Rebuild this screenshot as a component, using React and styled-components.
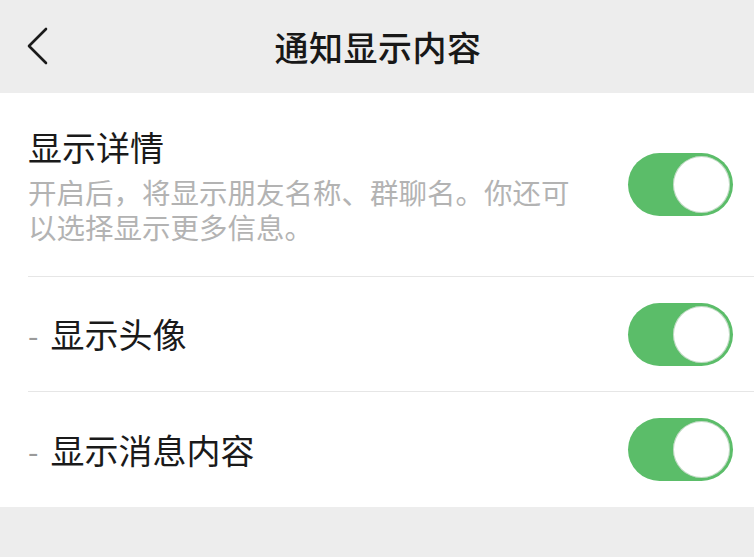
import React, { useState } from 'react';
import styled, { createGlobalStyle } from 'styled-components';

const GlobalStyle = createGlobalStyle`
  html, body {
    margin: 0;
    padding: 0;
    background: #ededed;
    font-family: "Noto Sans CJK SC", "Noto Sans", sans-serif;
  }
`;

const Page = styled.div`
  width: 754px;
  height: 557px;
  background: #ededed;
  overflow: hidden;
`;

const Header = styled.header`
  height: 93px;
  display: flex;
  align-items: center;
  justify-content: center;
  position: relative;
  background: #ededed;
`;

const BackButton = styled.button`
  position: absolute;
  left: 22px;
  top: 24px;
  width: 32px;
  height: 44px;
  padding: 0;
  border: none;
  background: none;
  display: flex;
  align-items: center;
  justify-content: center;
`;

const Title = styled.h1`
  margin: 0 0 0 2px;
  font-size: 34px;
  font-weight: 500;
  color: #181818;
  letter-spacing: 0.5px;
`;

const Section = styled.section`
  background: #fff;
`;

const Row = styled.div`
  padding-left: 28px;
`;

const RowInner = styled.div`
  display: flex;
  align-items: center;
  justify-content: space-between;
  padding-right: 21px;
  height: ${p => p.$height}px;
  box-sizing: border-box;
  border-bottom: ${p => (p.$last ? 'none' : '1px solid #e6e6e6')};
`;

const TextCol = styled.div`
  width: 560px;
`;

const ItemTitle = styled.div`
  font-size: 34px;
  line-height: 44px;
  color: #1a1a1a;
  display: flex;
  align-items: center;
`;

const Dash = styled.span`
  color: #9a9a9a;
  font-size: 30px;
  margin-right: 12px;
`;

const Desc = styled.div`
  margin-top: 5px;
  font-size: 28.5px;
  line-height: 35px;
  color: #b3b3b3;
`;

const Track = styled.button`
  width: 105px;
  height: 63px;
  border-radius: 32px;
  border: none;
  background: ${p => (p.$on ? '#5bbd69' : '#e5e5e5')};
  display: flex;
  align-items: center;
  justify-content: ${p => (p.$on ? 'flex-end' : 'flex-start')};
  padding: 0 3px;
  box-sizing: border-box;
  flex-shrink: 0;
  cursor: pointer;
`;

const Knob = styled.span`
  width: 57px;
  height: 57px;
  border-radius: 50%;
  background: #fff;
  box-shadow: inset 0 0 0 1px rgba(80, 150, 90, 0.35);
`;

function Toggle({ on, onChange }) {
  return (
    <Track $on={on} onClick={onChange}>
      <Knob />
    </Track>
  );
}

export default function App() {
  const [state, setState] = useState({ detail: true, avatar: true, content: true });
  const flip = key => setState(s => ({ ...s, [key]: !s[key] }));

  return (
    <>
      <GlobalStyle />
      <Page>
        <Header>
          <BackButton aria-label="返回">
            <svg width="32" height="44" viewBox="0 0 32 44">
              <polyline points="24,5 7,22 24,39" fill="none" stroke="#1a1a1a" strokeWidth="2.6" strokeLinecap="round" strokeLinejoin="round" />
            </svg>
          </BackButton>
          <Title>通知显示内容</Title>
        </Header>

        <Section>
          <Row>
            <RowInner $height={184}>
              <TextCol>
                <ItemTitle>显示详情</ItemTitle>
                <Desc>开启后，将显示朋友名称、群聊名。你还可以选择显示更多信息。</Desc>
              </TextCol>
              <Toggle on={state.detail} onChange={() => flip('detail')} />
            </RowInner>
          </Row>
          <Row>
            <RowInner $height={115}>
              <ItemTitle><Dash>-</Dash>显示头像</ItemTitle>
              <Toggle on={state.avatar} onChange={() => flip('avatar')} />
            </RowInner>
          </Row>
          <Row>
            <RowInner $height={115} $last>
              <ItemTitle><Dash>-</Dash>显示消息内容</ItemTitle>
              <Toggle on={state.content} onChange={() => flip('content')} />
            </RowInner>
          </Row>
        </Section>
      </Page>
    </>
  );
}
